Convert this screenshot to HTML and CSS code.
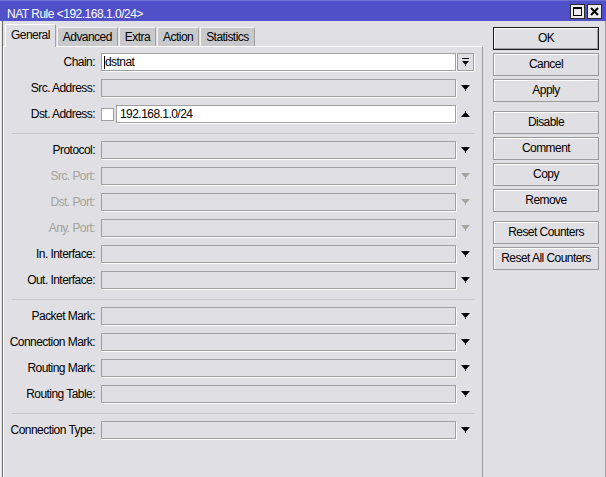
FILE: index.html
```html
<!DOCTYPE html>
<html>
<head>
    <title>NAT Rule &lt;192.168.1.0/24&gt;</title>
    <link rel="stylesheet" href="styles.css">
</head>
<body>
<div class="window">
    <div class="titlebar">
        <span class="title">NAT Rule &lt;192.168.1.0/24&gt;</span>
        <span class="winbtns">
            <span class="winbtn">
                <svg width="13" height="13" viewBox="0 0 13 13"><path d="M2 2h9v9H2z M3 4v6h7V4z" fill="#000" fill-rule="evenodd"/></svg>
            </span>
            <span class="winbtn">
                <svg width="13" height="13" viewBox="0 0 13 13"><path d="M3 3l7 7M10 3l-7 7" stroke="#000" stroke-width="2"/></svg>
            </span>
        </span>
    </div>
    <div class="body">
        <div class="left">
            <div class="tabs">
                <div class="tab active">General</div>
                <div class="tab">Advanced</div>
                <div class="tab">Extra</div>
                <div class="tab">Action</div>
                <div class="tab">Statistics</div>
            </div>
            <div class="panel">
                <div class="row">
                    <span class="label">Chain:</span>
                    <div class="field edit"><span class="caret"></span>dstnat</div>
                    <div class="arrow-cell"><span class="dropbox">
                        <svg width="7" height="8" viewBox="0 0 7 8"><path d="M0 0h7v1H0z M0 3h7L3.5 7z M3 7h1v1H3z" fill="#000"/></svg>
                    </span></div>
                </div>
                <div class="row">
                    <span class="label">Src. Address:</span>
                    <div class="field"></div>
                    <div class="arrow-cell"><svg class="arrow" width="9" height="6" viewBox="0 0 9 6"><path d="M0 0h9L4.5 5z M4 5h1v1H4z"/></svg></div>
                </div>
                <div class="row">
                    <span class="label">Dst. Address:</span>
                    <span class="check"></span>
                    <div class="field edit short">192.168.1.0/24</div>
                    <div class="arrow-cell"><svg class="arrow" width="9" height="6" viewBox="0 0 9 6"><path d="M0 6h9L4.5 1z M4 0h1v1H4z"/></svg></div>
                </div>
                <div class="sep"></div>
                <div class="row">
                    <span class="label">Protocol:</span>
                    <div class="field"></div>
                    <div class="arrow-cell"><svg class="arrow" width="9" height="6" viewBox="0 0 9 6"><path d="M0 0h9L4.5 5z M4 5h1v1H4z"/></svg></div>
                </div>
                <div class="row disabled">
                    <span class="label">Src. Port:</span>
                    <div class="field"></div>
                    <div class="arrow-cell"><svg class="arrow" width="9" height="6" viewBox="0 0 9 6"><path d="M0 0h9L4.5 5z M4 5h1v1H4z"/></svg></div>
                </div>
                <div class="row disabled">
                    <span class="label">Dst. Port:</span>
                    <div class="field"></div>
                    <div class="arrow-cell"><svg class="arrow" width="9" height="6" viewBox="0 0 9 6"><path d="M0 0h9L4.5 5z M4 5h1v1H4z"/></svg></div>
                </div>
                <div class="row disabled">
                    <span class="label">Any. Port:</span>
                    <div class="field"></div>
                    <div class="arrow-cell"><svg class="arrow" width="9" height="6" viewBox="0 0 9 6"><path d="M0 0h9L4.5 5z M4 5h1v1H4z"/></svg></div>
                </div>
                <div class="row">
                    <span class="label">In. Interface:</span>
                    <div class="field"></div>
                    <div class="arrow-cell"><svg class="arrow" width="9" height="6" viewBox="0 0 9 6"><path d="M0 0h9L4.5 5z M4 5h1v1H4z"/></svg></div>
                </div>
                <div class="row">
                    <span class="label">Out. Interface:</span>
                    <div class="field"></div>
                    <div class="arrow-cell"><svg class="arrow" width="9" height="6" viewBox="0 0 9 6"><path d="M0 0h9L4.5 5z M4 5h1v1H4z"/></svg></div>
                </div>
                <div class="sep"></div>
                <div class="row">
                    <span class="label">Packet Mark:</span>
                    <div class="field"></div>
                    <div class="arrow-cell"><svg class="arrow" width="9" height="6" viewBox="0 0 9 6"><path d="M0 0h9L4.5 5z M4 5h1v1H4z"/></svg></div>
                </div>
                <div class="row">
                    <span class="label">Connection Mark:</span>
                    <div class="field"></div>
                    <div class="arrow-cell"><svg class="arrow" width="9" height="6" viewBox="0 0 9 6"><path d="M0 0h9L4.5 5z M4 5h1v1H4z"/></svg></div>
                </div>
                <div class="row">
                    <span class="label">Routing Mark:</span>
                    <div class="field"></div>
                    <div class="arrow-cell"><svg class="arrow" width="9" height="6" viewBox="0 0 9 6"><path d="M0 0h9L4.5 5z M4 5h1v1H4z"/></svg></div>
                </div>
                <div class="row">
                    <span class="label">Routing Table:</span>
                    <div class="field"></div>
                    <div class="arrow-cell"><svg class="arrow" width="9" height="6" viewBox="0 0 9 6"><path d="M0 0h9L4.5 5z M4 5h1v1H4z"/></svg></div>
                </div>
                <div class="sep"></div>
                <div class="row">
                    <span class="label">Connection Type:</span>
                    <div class="field"></div>
                    <div class="arrow-cell"><svg class="arrow" width="9" height="6" viewBox="0 0 9 6"><path d="M0 0h9L4.5 5z M4 5h1v1H4z"/></svg></div>
                </div>
            </div>
        </div>
        <div class="buttons">
            <div class="btn default">OK</div>
            <div class="btn">Cancel</div>
            <div class="btn">Apply</div>
            <div class="btn group">Disable</div>
            <div class="btn">Comment</div>
            <div class="btn">Copy</div>
            <div class="btn">Remove</div>
            <div class="btn group">Reset Counters</div>
            <div class="btn">Reset All Counters</div>
        </div>
    </div>
</div>
</body>
</html>
```

FILE: styles.css
```css
body {
    margin: 0;
    background-color: #e0dfe3;
    font-family: "Liberation Sans", Arial, sans-serif;
    font-size: 12px;
    letter-spacing: -0.55px;
    color: #000;
}

.window {
    width: 606px;
    height: 477px;
    overflow: hidden;
}

.titlebar {
    height: 21px;
    box-sizing: border-box;
    background-color: #5050c8;
    border-top: 1px solid #6e6ed6;
    display: flex;
    justify-content: space-between;
    padding: 0 4px 0 7px;
    color: #fff;
}

.title {
    align-self: flex-end;
    line-height: 14px;
    letter-spacing: -0.5px;
}

.winbtns {
    display: flex;
    gap: 2px;
    margin-top: 3px;
    align-self: flex-start;
}

.winbtn {
    width: 15px;
    height: 15px;
    box-sizing: border-box;
    border: 1px solid #2b2b2b;
    background-color: #ecebee;
    display: flex;
    align-items: center;
    justify-content: center;
}

.body {
    display: flex;
    height: 456px;
    box-sizing: border-box;
    border-left: 1px solid #f4f4f4;
    border-right: 1px solid #a0a0a0;
}

.left {
    display: flex;
    flex-direction: column;
    margin-left: 2px;
    box-shadow: -1px 0 0 #6f6f6f;
    padding-top: 3px;
}

.tabs {
    display: flex;
    align-items: flex-end;
    height: 22px;
    padding-left: 2px;
}

.tab {
    height: 19px;
    box-sizing: border-box;
    line-height: 18px;
    padding: 0 5px;
    background-color: #c9c9cb;
    border-top: 1px solid #f2f2f2;
    border-left: 1px solid #f2f2f2;
    border-right: 1px solid #a0a0a0;
    margin-right: 1px;
}

.tab.active {
    position: relative;
    height: 23px;
    line-height: 21px;
    margin-bottom: -1px;
    background-color: #e0dfe3;
    border-color: #fff;
    border-right-color: #a0a0a0;
}

.panel {
    width: 480px;
    flex: 1;
    box-sizing: border-box;
    border-top: 1px solid #fff;
    border-left: 1px solid #fff;
    border-right: 1px solid #a0a0a0;
    padding-top: 6px;
    display: flex;
    flex-direction: column;
}

.row {
    display: flex;
    align-items: center;
    height: 18px;
    margin-bottom: 8px;
}

.label {
    width: 91px;
    margin-right: 6px;
    text-align: right;
    line-height: 18px;
    white-space: nowrap;
}

.disabled .label {
    color: #a3a39b;
}

.field {
    width: 355px;
    height: 18px;
    box-sizing: border-box;
    border: 1px solid #a0a0a0;
    box-shadow: 1px 1px 0 #fff;
    padding-left: 3px;
    line-height: 16px;
    white-space: nowrap;
}

.field.edit {
    background-color: #fff;
}

.field.short {
    width: 340px;
}

.caret {
    display: inline-block;
    width: 1px;
    height: 13px;
    background-color: #000;
    vertical-align: -3px;
    margin-left: -1px;
}

.check {
    width: 13px;
    height: 13px;
    box-sizing: border-box;
    border: 1px solid #a0a0a0;
    background-color: #fff;
    margin-right: 2px;
}

.arrow-cell {
    width: 19px;
    height: 18px;
    display: flex;
    align-items: center;
    justify-content: center;
}

.arrow {
    fill: #000;
}

.disabled .arrow {
    fill: #a5a59d;
}

.dropbox {
    width: 17px;
    height: 18px;
    box-sizing: border-box;
    border: 1px solid #a0a0a0;
    box-shadow: 1px 1px 0 #fff;
    display: flex;
    align-items: center;
    justify-content: center;
}

.sep {
    height: 1px;
    background-color: #c9c9cc;
    margin: 2px 7px 7px 8px;
}

.buttons {
    width: 106px;
    margin-left: 10px;
    padding-top: 6px;
    display: flex;
    flex-direction: column;
    gap: 3px;
}

.btn {
    height: 23px;
    box-sizing: border-box;
    border: 1px solid #9a9a9a;
    box-shadow: inset 1px 1px 0 #fff;
    text-align: center;
    line-height: 21px;
    white-space: nowrap;
}

.btn.default {
    border-color: #1c1c1c;
    box-shadow: inset 1px 1px 0 #fff, inset -1px -1px 0 #a0a0a0;
}

.btn.group {
    margin-top: 6px;
}
```
